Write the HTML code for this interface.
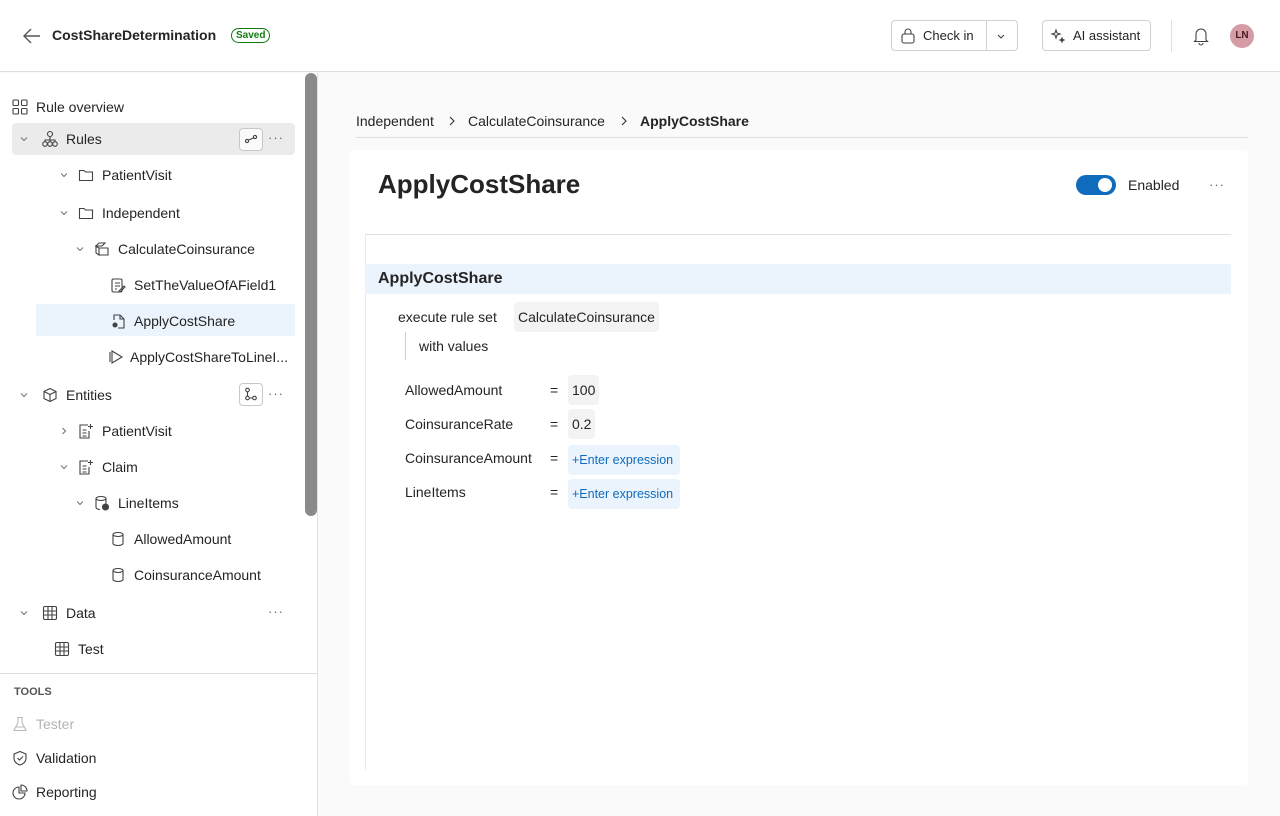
<!DOCTYPE html>
<html><head><meta charset="utf-8"><style>
*{box-sizing:border-box;margin:0;padding:0}
body{width:1280px;height:816px;overflow:hidden;font-family:"Liberation Sans",sans-serif;font-size:14px;color:#242424;background:#fafafa;position:relative}
.hdr{position:absolute;left:0;top:0;width:1280px;height:72px;background:#fff;border-bottom:1px solid #e0e0e0}
.abs{position:absolute}
.side{position:absolute;left:0;top:73px;width:318px;height:743px;background:#fff;border-right:1px solid #e0e0e0}
svg{position:absolute;fill:none;stroke:#424242;stroke-width:1.1}
.btn{position:absolute;border:1px solid #d1d1d1;border-radius:4px;background:#fff;height:31px;display:flex;align-items:center;font-size:13px}
.dots{position:absolute;color:#666;font-size:13px;letter-spacing:1px}
.card{position:absolute;left:350px;top:150px;width:898px;height:635px;background:#fff;border-radius:4px}
.pill{position:absolute;background:#f3f3f3;border-radius:4px;height:30px;display:flex;align-items:center;padding:0 4px;font-size:14px}
.expr{position:absolute;background:#ebf3fc;border-radius:4px;height:30px;display:flex;align-items:center;padding:0 4px;font-size:12.5px;color:#0f6cbd;width:112px}
</style></head><body>
<div class="hdr">
 <svg style="left:22px;top:27px" width="20" height="18" viewBox="0 0 20 18"><path d="M18 9H3M9 2L2 9l7 7" stroke="#555" stroke-width="1.4"/></svg>
 <div class="abs" style="left:52px;top:27px;font-weight:bold;font-size:14px">CostShareDetermination</div>
 <div class="abs" style="left:231px;top:28px;border:1.5px solid #107c10;color:#107c10;border-radius:9px;font-size:10px;font-weight:bold;padding:1px 4px;line-height:11px">Saved</div>
 <div class="btn" style="left:891px;top:20px;width:127px">
   <svg style="left:8px;top:7px" width="16" height="16" viewBox="0 0 16 16"><rect x="2" y="6" width="12" height="9" rx="2"/><path d="M5 6V4a3 3 0 016 0v2"/></svg>
   <span style="position:absolute;left:31px">Check in</span>
   <div style="position:absolute;left:94px;top:0;height:29px;border-left:1px solid #d1d1d1"></div>
   <svg style="left:104px;top:10px" width="10" height="10" viewBox="0 0 10 10"><path d="M2 4l3 3 3-3"/></svg>
 </div>
 <div class="btn" style="left:1042px;top:20px;width:109px">
   <svg style="left:7px;top:7px" width="16" height="16" viewBox="0 0 16 16"><path d="M6 2l1 3 3 1-3 1-1 3-1-3-3-1 3-1z"/><path d="M12 10l.6 1.4 1.4.6-1.4.6-.6 1.4-.6-1.4-1.4-.6 1.4-.6z" fill="#424242"/></svg>
   <span style="position:absolute;left:30px">AI assistant</span>
 </div>
 <div class="abs" style="left:1171px;top:20px;height:32px;border-left:1px solid #e0e0e0"></div>
 <svg style="left:1192px;top:26px" width="18" height="20" viewBox="0 0 18 20"><path d="M4 14V8a5 5 0 0110 0v6l1.5 1.5h-13zM7 17a2 2 0 004 0"/></svg>
 <div class="abs" style="left:1230px;top:24px;width:24px;height:24px;border-radius:12px;background:#d69ca5;font-size:10px;font-weight:bold;color:#4a1a20;text-align:center;line-height:24px">LN</div>
</div>

<div class="side">
 <div class="abs" style="left:305px;top:0;width:12px;height:443px;background:#8a8a8a;border-radius:6px"></div>
 <div class="abs" style="left:12px;top:50px;width:283px;height:32px;background:#ebebeb;border-radius:4px"></div>
 <div class="abs" style="left:36px;top:231px;width:259px;height:32px;background:#ebf3fc"></div>
</div>
<svg style="left:12px;top:99px" width="16" height="16" viewBox="0 0 16 16"><rect x="1" y="1" width="5.5" height="5.5" rx="1"/><rect x="9.5" y="1" width="5.5" height="5.5" rx="1"/><rect x="1" y="9.5" width="5.5" height="5.5" rx="1"/><rect x="9.5" y="9.5" width="5.5" height="5.5" rx="1"/></svg>
<div class="abs" style="left:36px;top:99px">Rule overview</div>

<svg style="left:19px;top:134px" width="10" height="10" viewBox="0 0 10 10"><path d="M2 3.5l3 3 3-3" stroke="#777"/></svg>
<svg style="left:42px;top:130px" width="16" height="18" viewBox="0 0 16 18"><circle cx="8" cy="4" r="2.5"/><circle cx="3" cy="14" r="2.3"/><circle cx="8" cy="14" r="2.3"/><circle cx="13" cy="14" r="2.3"/><path d="M8 6.5v5M3 11.5V10h10v1.5"/></svg>
<div class="abs" style="left:66px;top:131px">Rules</div>
<div class="abs" style="left:239px;top:128px;width:24px;height:23px;border:1px solid #c8c8c8;border-radius:4px;background:#fafafa"></div>
<svg style="left:244px;top:133px" width="14" height="12" viewBox="0 0 14 12"><circle cx="3" cy="8" r="1.6"/><circle cx="11" cy="4" r="1.6"/><path d="M4.5 7l5-2"/></svg>
<div class="dots" style="left:268px;top:130px">···</div>

<svg style="left:59px;top:170px" width="10" height="10" viewBox="0 0 10 10"><path d="M2 3.5l3 3 3-3" stroke="#777"/></svg>
<svg style="left:78px;top:167px" width="16" height="16" viewBox="0 0 16 16"><path d="M1.5 3.5h4.5l1.5 1.5h7v8.5h-13z"/></svg>
<div class="abs" style="left:102px;top:167px">PatientVisit</div>
<svg style="left:59px;top:208px" width="10" height="10" viewBox="0 0 10 10"><path d="M2 3.5l3 3 3-3" stroke="#777"/></svg>
<svg style="left:78px;top:205px" width="16" height="16" viewBox="0 0 16 16"><path d="M1.5 3.5h4.5l1.5 1.5h7v8.5h-13z"/></svg>
<div class="abs" style="left:102px;top:205px">Independent</div>
<svg style="left:75px;top:244px" width="10" height="10" viewBox="0 0 10 10"><path d="M2 3.5l3 3 3-3" stroke="#777"/></svg>
<svg style="left:94px;top:241px" width="16" height="16" viewBox="0 0 16 16"><path d="M2 5l3-3h6l-3 3zM2 5v7l3 2V7zM5 7h9v7H5z"/></svg>
<div class="abs" style="left:118px;top:241px">CalculateCoinsurance</div>
<svg style="left:110px;top:277px" width="16" height="16" viewBox="0 0 16 16"><rect x="2" y="2" width="10" height="13" rx="1.5"/><path d="M5 6h5M5 9h5M5 12h2M9 14l5-5 1 1-5 5h-1z"/></svg>
<div class="abs" style="left:134px;top:277px">SetTheValueOfAField1</div>
<svg style="left:110px;top:313px" width="16" height="16" viewBox="0 0 16 16"><path d="M4 7V2h6l4 4v9H8M10 2v4h4"/><circle cx="5" cy="12" r="2" fill="#424242"/></svg>
<div class="abs" style="left:134px;top:313px">ApplyCostShare</div>
<svg style="left:108px;top:349px" width="16" height="16" viewBox="0 0 16 16"><path d="M2 3v10M4 2l10 6-10 6z"/></svg>
<div class="abs" style="left:130px;top:349px">ApplyCostShareToLineI...</div>

<svg style="left:19px;top:390px" width="10" height="10" viewBox="0 0 10 10"><path d="M2 3.5l3 3 3-3" stroke="#777"/></svg>
<svg style="left:42px;top:387px" width="16" height="16" viewBox="0 0 16 16"><path d="M8 1.5l6 3v7l-6 3-6-3v-7zM2 4.5l6 3 6-3M8 7.5v7"/></svg>
<div class="abs" style="left:66px;top:387px">Entities</div>
<div class="abs" style="left:239px;top:383px;width:24px;height:23px;border:1px solid #c8c8c8;border-radius:4px"></div>
<svg style="left:244px;top:387px" width="14" height="14" viewBox="0 0 14 14"><circle cx="3.5" cy="3" r="1.8"/><circle cx="3.5" cy="11" r="1.8"/><circle cx="10.5" cy="11" r="1.8"/><path d="M3.5 5v4M5.3 11h3.4"/></svg>
<div class="dots" style="left:268px;top:386px">···</div>
<svg style="left:59px;top:426px" width="10" height="10" viewBox="0 0 10 10"><path d="M3.5 2l3 3-3 3" stroke="#777"/></svg>
<svg style="left:78px;top:423px" width="16" height="16" viewBox="0 0 16 16"><path d="M10 2H2v13h9V8M4.5 7h4M4.5 10h4M4.5 13h4M12.5 1v5M10 3.5h5"/></svg>
<div class="abs" style="left:102px;top:423px">PatientVisit</div>
<svg style="left:59px;top:462px" width="10" height="10" viewBox="0 0 10 10"><path d="M2 3.5l3 3 3-3" stroke="#777"/></svg>
<svg style="left:78px;top:459px" width="16" height="16" viewBox="0 0 16 16"><path d="M10 2H2v13h9V8M4.5 7h4M4.5 10h4M4.5 13h4M12.5 1v5M10 3.5h5"/></svg>
<div class="abs" style="left:102px;top:459px">Claim</div>
<svg style="left:75px;top:498px" width="10" height="10" viewBox="0 0 10 10"><path d="M2 3.5l3 3 3-3" stroke="#777"/></svg>
<svg style="left:94px;top:495px" width="16" height="16" viewBox="0 0 16 16"><ellipse cx="7" cy="3.5" rx="5" ry="2"/><path d="M2 3.5v9c0 1 2 2 4 2M12 3.5v5"/><circle cx="11.5" cy="12" r="3" fill="#424242"/></svg>
<div class="abs" style="left:118px;top:495px">LineItems</div>
<svg style="left:110px;top:531px" width="16" height="16" viewBox="0 0 16 16"><ellipse cx="8" cy="3.5" rx="5" ry="2"/><path d="M3 3.5v9c0 1 2.2 2 5 2s5-1 5-2v-9"/></svg>
<div class="abs" style="left:134px;top:531px">AllowedAmount</div>
<svg style="left:110px;top:567px" width="16" height="16" viewBox="0 0 16 16"><ellipse cx="8" cy="3.5" rx="5" ry="2"/><path d="M3 3.5v9c0 1 2.2 2 5 2s5-1 5-2v-9"/></svg>
<div class="abs" style="left:134px;top:567px">CoinsuranceAmount</div>
<svg style="left:19px;top:608px" width="10" height="10" viewBox="0 0 10 10"><path d="M2 3.5l3 3 3-3" stroke="#777"/></svg>
<svg style="left:42px;top:605px" width="16" height="16" viewBox="0 0 16 16"><rect x="1.5" y="1.5" width="13" height="13" rx="1.5"/><path d="M1.5 6h13M1.5 10h13M6 1.5v13M10 1.5v13"/></svg>
<div class="abs" style="left:66px;top:605px">Data</div>
<div class="dots" style="left:268px;top:604px">···</div>
<svg style="left:54px;top:641px" width="16" height="16" viewBox="0 0 16 16"><rect x="1.5" y="1.5" width="13" height="13" rx="1.5"/><path d="M1.5 6h13M1.5 10h13M6 1.5v13M10 1.5v13"/></svg>
<div class="abs" style="left:78px;top:641px">Test</div>

<div class="abs" style="left:0;top:673px;width:318px;height:143px;background:#fff;border-top:1px solid #e0e0e0;border-right:1px solid #e0e0e0"></div>
<div class="abs" style="left:14px;top:686px;font-size:11px;font-weight:bold;color:#555">TOOLS</div>
<svg style="left:12px;top:716px;stroke:#bbb" width="16" height="16" viewBox="0 0 16 16"><path d="M5 1.5h6M6 1.5v5l-4 8h12l-4-8v-5M4 11h8"/></svg>
<div class="abs" style="left:36px;top:716px;color:#b3b3b3">Tester</div>
<svg style="left:12px;top:750px" width="16" height="16" viewBox="0 0 16 16"><path d="M8 1.5l6 2.5v4c0 4-3 6-6 7-3-1-6-3-6-7V4z"/><path d="M5.5 8l2 2 3.5-3.5"/></svg>
<div class="abs" style="left:36px;top:750px">Validation</div>
<svg style="left:12px;top:784px" width="16" height="16" viewBox="0 0 16 16"><path d="M7 3a6 6 0 106 6H7z"/><path d="M9 1a6 6 0 016 6H9z"/></svg>
<div class="abs" style="left:36px;top:784px">Reporting</div>

<div class="abs" style="left:356px;top:113px">Independent</div>
<svg style="left:447px;top:115px" width="10" height="12" viewBox="0 0 10 12"><path d="M3 2l4 4-4 4" stroke="#333"/></svg>
<div class="abs" style="left:468px;top:113px">CalculateCoinsurance</div>
<svg style="left:619px;top:115px" width="10" height="12" viewBox="0 0 10 12"><path d="M3 2l4 4-4 4" stroke="#333"/></svg>
<div class="abs" style="left:640px;top:113px;font-weight:bold">ApplyCostShare</div>
<div class="abs" style="left:356px;top:137px;width:892px;border-top:1px solid #e0e0e0"></div>

<div class="card">
 <div class="abs" style="left:28px;top:19px;font-size:26px;font-weight:bold">ApplyCostShare</div>
 <div class="abs" style="left:726px;top:25px;width:40px;height:20px;border-radius:10px;background:#0f6cbd"></div>
 <div class="abs" style="left:748px;top:28px;width:14px;height:14px;border-radius:7px;background:#fff"></div>
 <div class="abs" style="left:778px;top:27px">Enabled</div>
 <div class="dots" style="left:859px;top:27px">···</div>
 <div class="abs" style="left:15px;top:84px;width:866px;border-top:1px solid #e0e0e0"></div>
 <div class="abs" style="left:15px;top:85px;height:535px;border-left:1px solid #e8e8e8"></div>
 <div class="abs" style="left:15px;top:114px;width:866px;height:30px;background:#ebf3fc"></div>
 <div class="abs" style="left:28px;top:120px;font-size:16px;font-weight:bold">ApplyCostShare</div>
 <div class="abs" style="left:48px;top:159px">execute rule set</div>
 <div class="pill" style="left:164px;top:152px">CalculateCoinsurance</div>
 <div class="abs" style="left:55px;top:182px;height:28px;border-left:1px solid #ccc"></div>
 <div class="abs" style="left:69px;top:188px">with values</div>
 <div class="abs" style="left:55px;top:232px">AllowedAmount</div>
 <div class="abs" style="left:55px;top:266px">CoinsuranceRate</div>
 <div class="abs" style="left:55px;top:300px">CoinsuranceAmount</div>
 <div class="abs" style="left:55px;top:334px">LineItems</div>
 <div class="abs" style="left:200px;top:232px">=</div>
 <div class="abs" style="left:200px;top:266px">=</div>
 <div class="abs" style="left:200px;top:300px">=</div>
 <div class="abs" style="left:200px;top:334px">=</div>
 <div class="pill" style="left:218px;top:225px">100</div>
 <div class="pill" style="left:218px;top:259px">0.2</div>
 <div class="expr" style="left:218px;top:295px">+Enter expression</div>
 <div class="expr" style="left:218px;top:329px">+Enter expression</div>
</div>
</body></html>
